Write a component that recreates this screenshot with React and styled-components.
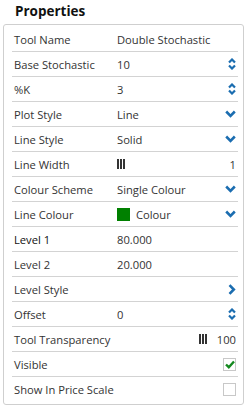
import React from "react"
import styled, { createGlobalStyle } from "styled-components"

const GlobalStyle = createGlobalStyle`
  body {
    margin: 0;
    background: #fff;
    font-family: "Open Sans", "Liberation Sans", sans-serif;
  }
`

const Wrapper = styled.main`
  width: 250px;
  height: 407px;
  box-sizing: border-box;
  padding: 0 6px 2px 3px;
  display: flex;
  flex-direction: column;
`

const Title = styled.h1`
  margin: 0;
  padding: 1px 0 0 12px;
  height: 24px;
  box-sizing: border-box;
  font-size: 13.5px;
  font-weight: 700;
  color: #111;
  line-height: 20px;
`

const Panel = styled.section`
  flex: 1;
  border: 1px solid #cfcfcf;
  border-radius: 3px;
  padding: 2px 5px 0 8px;
`

const Row = styled.div`
  display: grid;
  grid-template-columns: 103px 1fr auto;
  align-items: center;
  height: 25px;
  box-sizing: border-box;
  padding: 0 2px;
  border-bottom: ${(p) => (p.last ? "none" : "1px solid #d3d3d3")};
  font-size: 11.2px;
  color: #333;
`

const Label = styled.span`
  color: ${(p) => (p.strong ? "#111" : "#333")};
  white-space: nowrap;
`

const Value = styled.span`
  display: flex;
  align-items: center;
  gap: 6px;
  white-space: nowrap;
`

const Right = styled.span`
  display: flex;
  align-items: center;
  justify-content: flex-end;
  gap: 10px;
`

const Swatch = styled.span`
  width: 13px;
  height: 13px;
  background: #008000;
  display: inline-block;
`

const Box = styled.span`
  width: 11px;
  height: 11px;
  border: 1px solid #c8c8c8;
  display: flex;
  align-items: center;
  justify-content: center;
  background: #fff;
`

const blue = "#1b6db0"

const Spinner = () => (
  <svg width="8" height="12" viewBox="0 0 8 12">
    <path d="M1 4.5 L4 1.5 L7 4.5" fill="none" stroke={blue} strokeWidth="2.2" />
    <path d="M1 7.5 L4 10.5 L7 7.5" fill="none" stroke={blue} strokeWidth="2.2" />
  </svg>
)

const ChevronDown = () => (
  <svg width="11" height="8" viewBox="0 0 11 8">
    <path d="M1.2 1.5 L5.5 5.8 L9.8 1.5" fill="none" stroke={blue} strokeWidth="2.6" />
  </svg>
)

const ChevronRight = () => (
  <svg width="8" height="11" viewBox="0 0 8 11">
    <path d="M1.5 1.2 L5.8 5.5 L1.5 9.8" fill="none" stroke={blue} strokeWidth="2.6" />
  </svg>
)

const Bars = () => (
  <svg width="8" height="10" viewBox="0 0 8 10">
    <rect x="0" y="0" width="2" height="10" fill="#333" />
    <rect x="3" y="0" width="2" height="10" fill="#333" />
    <rect x="6" y="0" width="2" height="10" fill="#333" />
  </svg>
)

const Check = () => (
  <svg width="10" height="9" viewBox="0 0 10 9">
    <path d="M1 4.5 L3.8 7.2 L9 1.5" fill="none" stroke="#14891f" strokeWidth="2.4" />
  </svg>
)

const rows = [
  { label: "Tool Name", value: "Double Stochastic" },
  { label: "Base Stochastic", value: "10", right: <Spinner /> },
  { label: "%K", value: "3", right: <Spinner /> },
  { label: "Plot Style", value: "Line", right: <ChevronDown /> },
  { label: "Line Style", value: "Solid", right: <ChevronDown /> },
  { label: "Line Width", value: <Bars />, right: "1" },
  { label: "Colour Scheme", value: "Single Colour", right: <ChevronDown /> },
  { label: "Line Colour", value: <><Swatch />Colour</>, right: <ChevronDown /> },
  { label: "Level 1", value: "80.000", strong: true },
  { label: "Level 2", value: "20.000" },
  { label: "Level Style", right: <ChevronRight /> },
  { label: "Offset", value: "0", right: <Spinner /> },
  { label: "Tool Transparency", right: <><Bars />100</> },
  { label: "Visible", right: <Box><Check /></Box> },
  { label: "Show In Price Scale", right: <Box /> },
]

const App = () => {
  return (
    <Wrapper>
      <GlobalStyle />
      <Title>Properties</Title>
      <Panel>
        {rows.map((row, index) => (
          <Row key={index} last={index === rows.length - 1}>
            <Label strong={row.strong}>{row.label}</Label>
            <Value>{row.value}</Value>
            <Right>{row.right}</Right>
          </Row>
        ))}
      </Panel>
    </Wrapper>
  )
}

export default App
